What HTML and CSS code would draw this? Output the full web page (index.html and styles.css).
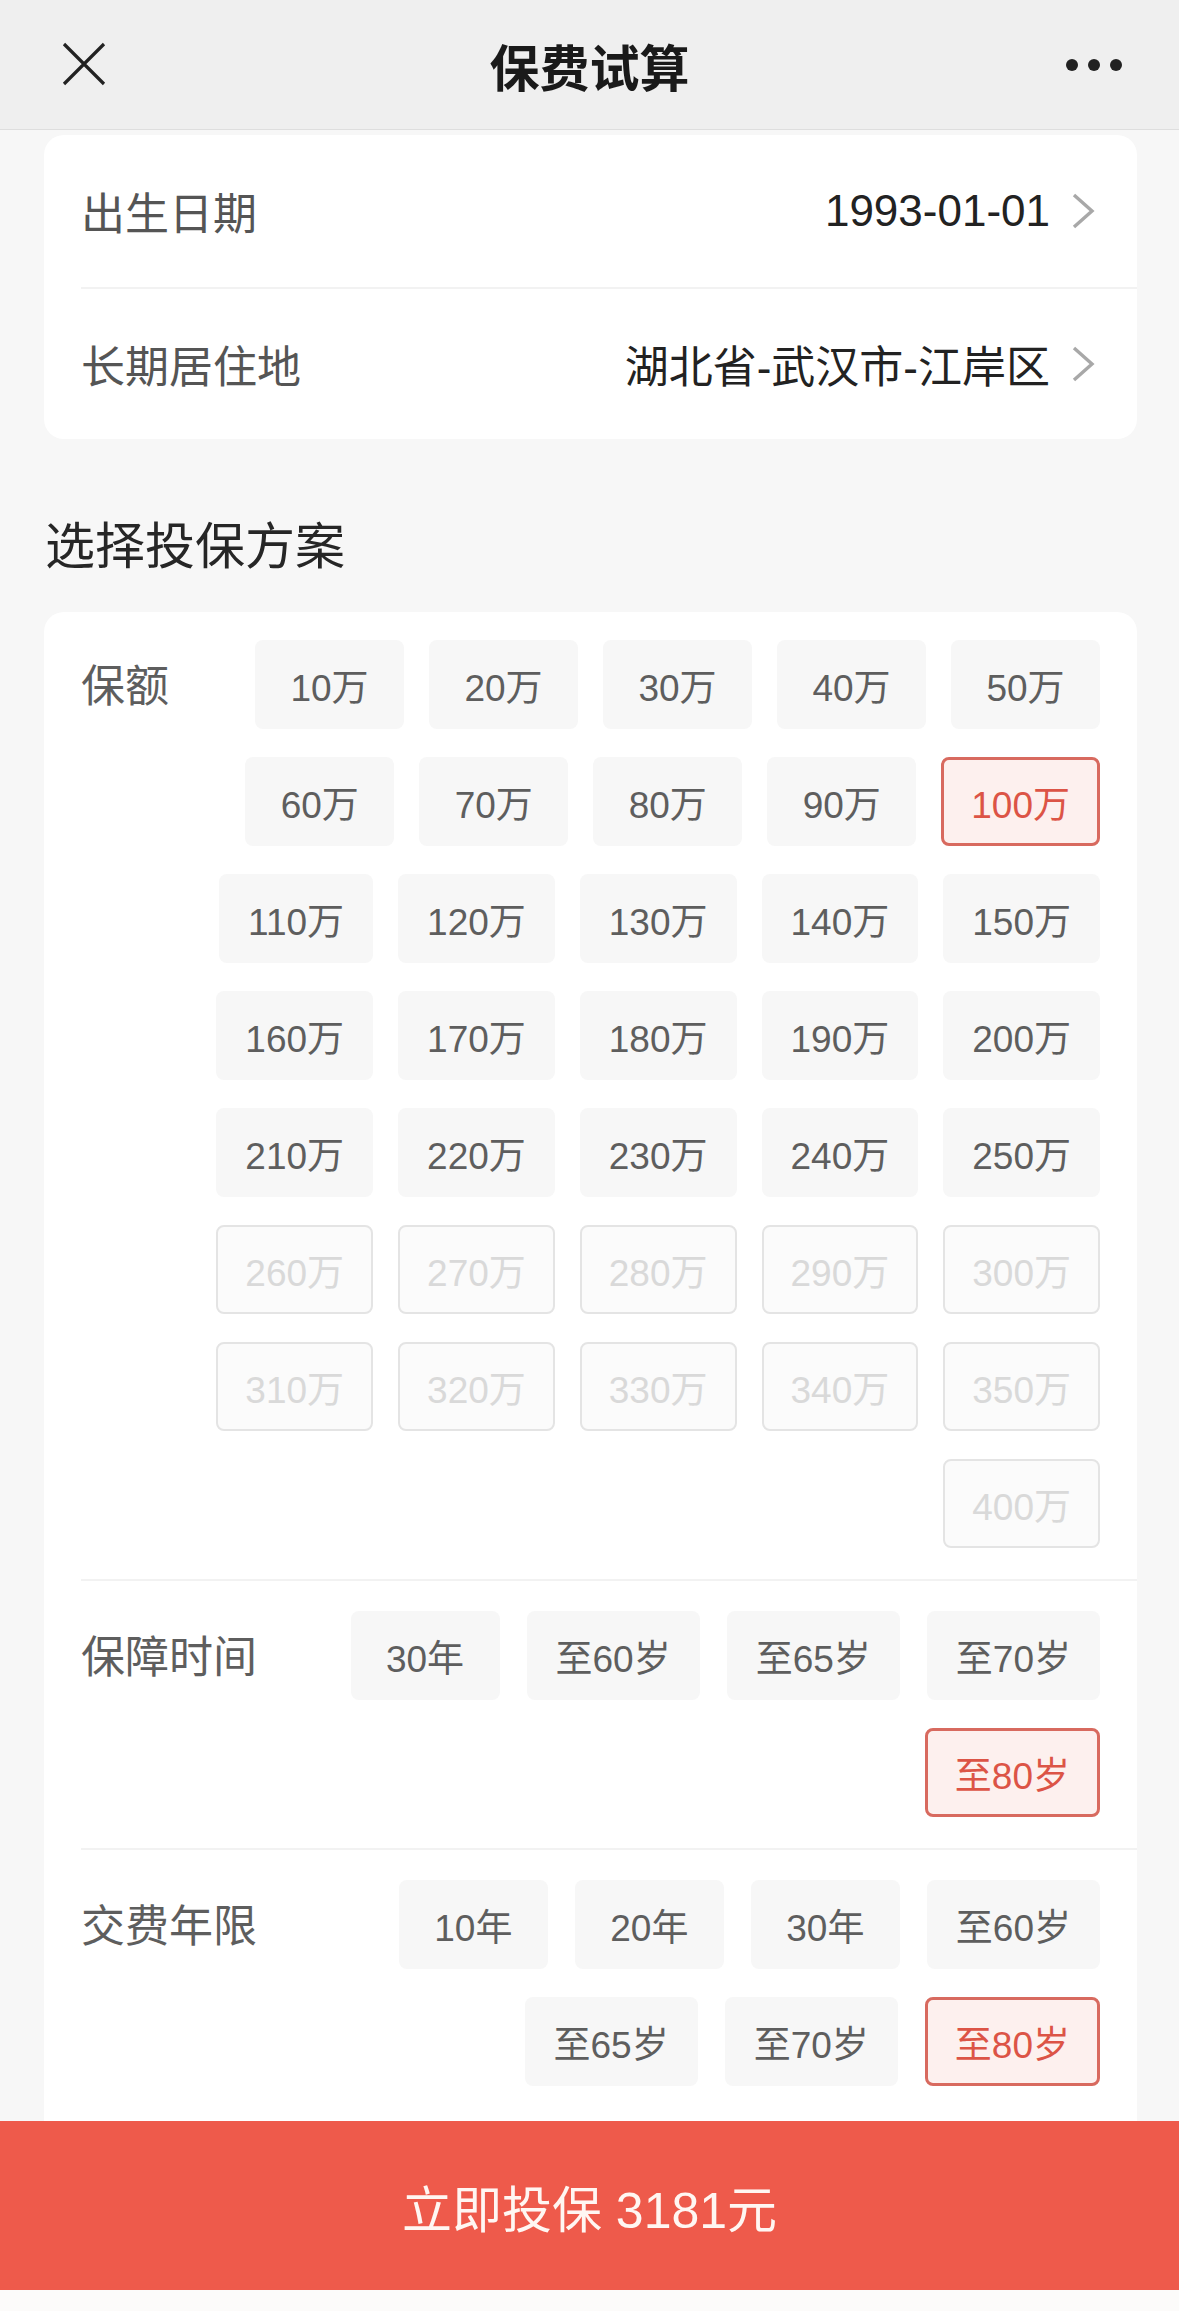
FILE: index.html
```html
<!DOCTYPE html>
<html lang="zh-CN">
<head>
  <meta charset="UTF-8" />
  <meta name="viewport" content="width=device-width, initial-scale=1.0"/>
  <title>保费试算</title>
  <link rel="stylesheet" href="styles.css">
</head>
<body>
  <div class="nav">
    <svg class="nav-close" width="44" height="44" viewBox="0 0 44 44">
      <path d="M2 2 L42 42 M42 2 L2 42" stroke="#222" stroke-width="3.2" fill="none"/>
    </svg>
    <div class="nav-title">保费试算</div>
    <div class="nav-more"><i></i><i></i><i></i></div>
  </div>

  <div class="page">
    <div class="card info">
      <div class="info-row">
        <span class="info-label">出生日期</span>
        <span class="info-value">1993-01-01</span>
        <svg class="chev" width="24" height="36" viewBox="0 0 24 36"><path d="M3 2 L21 18 L3 34" stroke="#a8a8a8" stroke-width="3.4" fill="none"/></svg>
      </div>
      <div class="info-row">
        <span class="info-label">长期居住地</span>
        <span class="info-value">湖北省-武汉市-江岸区</span>
        <svg class="chev" width="24" height="36" viewBox="0 0 24 36"><path d="M3 2 L21 18 L3 34" stroke="#a8a8a8" stroke-width="3.4" fill="none"/></svg>
      </div>
    </div>

    <h2 class="sec-title">选择投保方案</h2>

    <div class="card plan">
      <div class="plan-sec">
        <div class="plan-label">保额</div>
        <div class="opts">
          <button class="opt">10万</button>
          <button class="opt">20万</button>
          <button class="opt">30万</button>
          <button class="opt">40万</button>
          <button class="opt">50万</button>
          <button class="opt">60万</button>
          <button class="opt">70万</button>
          <button class="opt">80万</button>
          <button class="opt">90万</button>
          <button class="opt on">100万</button>
          <button class="opt">110万</button>
          <button class="opt">120万</button>
          <button class="opt">130万</button>
          <button class="opt">140万</button>
          <button class="opt">150万</button>
          <button class="opt">160万</button>
          <button class="opt">170万</button>
          <button class="opt">180万</button>
          <button class="opt">190万</button>
          <button class="opt">200万</button>
          <button class="opt">210万</button>
          <button class="opt">220万</button>
          <button class="opt">230万</button>
          <button class="opt">240万</button>
          <button class="opt">250万</button>
          <button class="opt off">260万</button>
          <button class="opt off">270万</button>
          <button class="opt off">280万</button>
          <button class="opt off">290万</button>
          <button class="opt off">300万</button>
          <button class="opt off">310万</button>
          <button class="opt off">320万</button>
          <button class="opt off">330万</button>
          <button class="opt off">340万</button>
          <button class="opt off">350万</button>
          <button class="opt off">400万</button>
        </div>
      </div>

      <div class="plan-sec">
        <div class="plan-label">保障时间</div>
        <div class="opts wide">
          <button class="opt">30年</button>
          <button class="opt">至60岁</button>
          <button class="opt">至65岁</button>
          <button class="opt">至70岁</button>
          <button class="opt on">至80岁</button>
        </div>
      </div>

      <div class="plan-sec">
        <div class="plan-label">交费年限</div>
        <div class="opts wide">
          <button class="opt">10年</button>
          <button class="opt">20年</button>
          <button class="opt">30年</button>
          <button class="opt">至60岁</button>
          <button class="opt">至65岁</button>
          <button class="opt">至70岁</button>
          <button class="opt on">至80岁</button>
        </div>
      </div>
    </div>
  </div>

  <div class="buy-bar">
    <button class="buy-btn">立即投保 3181元</button>
  </div>
</body>
</html>
```

FILE: styles.css
```css
* { box-sizing: border-box; }
body {
  margin: 0;
  background: #f7f7f7;
  font-family: "Liberation Sans", "Noto Sans CJK SC", sans-serif;
  color: #222;
}

.nav {
  height: 130px;
  background: #efefef;
  border-bottom: 1px solid #dedede;
  display: flex;
  align-items: center;
  justify-content: space-between;
  padding: 0 57px 0 62px;
  position: relative;
}
.nav-close { display: block; margin-top: -2px; }
.nav-title {
  position: absolute;
  left: 0;
  right: 0;
  text-align: center;
  font-size: 50px;
  font-weight: bold;
  color: #1a1a1a;
  pointer-events: none;
}
.nav-more { display: flex; gap: 10px; }
.nav-more i {
  width: 12px;
  height: 12px;
  border-radius: 50%;
  background: #222;
}

.page { padding: 5px 42px 0 44px; }
.card {
  background: #fff;
  border-radius: 20px;
}

.info-row {
  display: flex;
  align-items: center;
  height: 152px;
  margin-left: 37px;
  padding-right: 42px;
  font-size: 44px;
}
.info-row + .info-row { border-top: 2px solid #f2f2f2; }
.info-label { color: #555; flex: 1; }
.info-value { color: #222; margin-right: 21px; }
.chev { display: block; }

.sec-title {
  margin: 0;
  padding: 83px 0 40px 1px;
  font-size: 50px;
  line-height: 50px;
  font-weight: normal;
  color: #262626;
}

.plan { padding: 0 0 60px 37px; }
.plan-sec {
  display: flex;
  padding: 30px 37px 31px 0;
}
.plan-sec:first-child { padding-top: 28px; }
.plan-sec + .plan-sec { border-top: 2px solid #f2f2f2; }
.plan-label {
  flex: 1;
  min-width: 0;
  white-space: nowrap;
  font-size: 44px;
  line-height: 93px;
  color: #5e5e5e;
}
.opts {
  width: 890px;
  flex: none;
  display: flex;
  flex-wrap: wrap;
  justify-content: flex-end;
  gap: 28px 25px;
}
.opts.wide { gap: 28px 27px; }

.opt {
  height: 89px;
  min-width: 149px;
  padding: 0 27px;
  border: 2px solid transparent;
  border-radius: 8px;
  background: #f7f7f7;
  color: #5e5e5e;
  font-family: inherit;
  font-size: 37px;
}
.opt.on {
  border: 3px solid #d86a5f;
  background: #fdf0ee;
  color: #dc5446;
}
.opt.off {
  border-color: #e4e4e4;
  background: #fbfbfb;
  color: #d9d9d9;
}

.buy-bar {
  position: fixed;
  left: 0;
  right: 0;
  bottom: 0;
  height: 190px;
  padding-bottom: 21px;
  background: #fcfbfa;
}
.buy-btn {
  display: block;
  width: 100%;
  height: 169px;
  border: none;
  background: #ee5a4b;
  color: #fff6f2;
  font-family: inherit;
  font-size: 50px;
}
```
